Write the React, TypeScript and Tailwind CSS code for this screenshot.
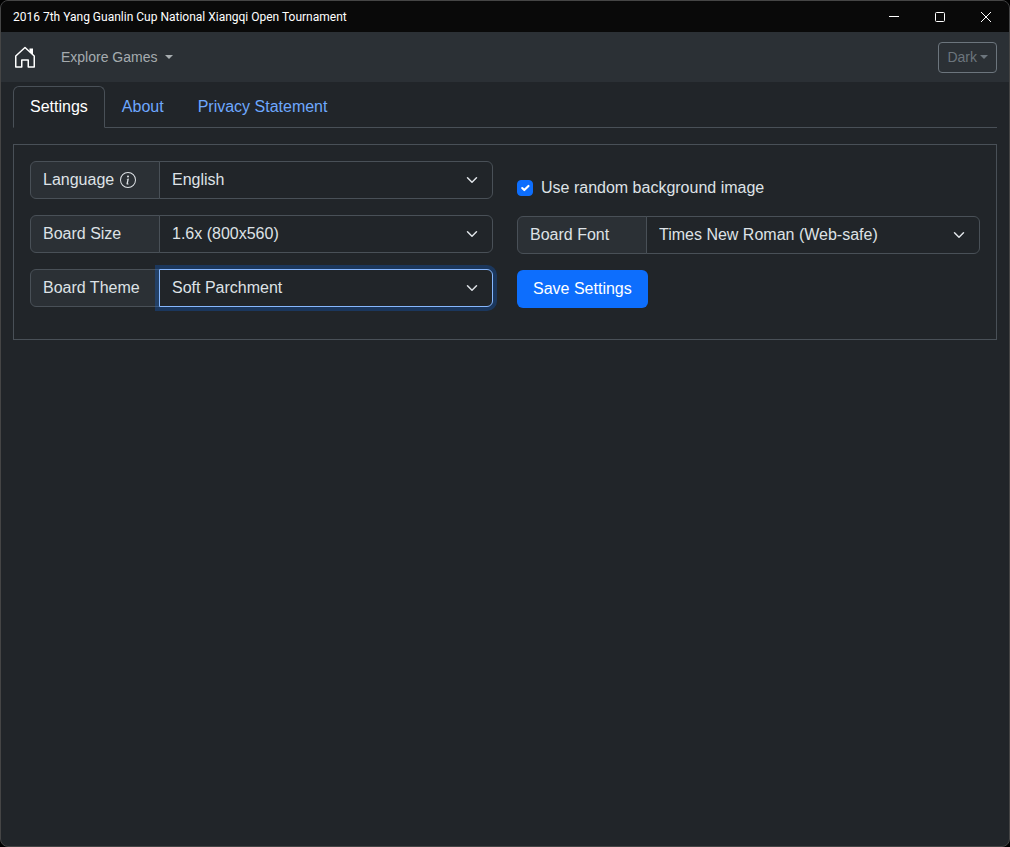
import React, { useState } from "react";
import { BsInfoCircle } from "react-icons/bs";

const tabs = ["Settings", "About", "Privacy Statement"];

type SelectGroupProps = {
  id: string;
  label: React.ReactNode;
  options: string[];
  autoFocus?: boolean;
};

function SelectGroup({ id, label, options, autoFocus }: SelectGroupProps) {
  const [value, setValue] = useState(options[0]);

  return (
    <div className="flex h-[38px]">
      <label
        htmlFor={id}
        className="flex w-[130px] shrink-0 items-center gap-1.5 rounded-l-md border border-[#495057] bg-[#2b3035] px-3 whitespace-nowrap"
      >
        {label}
      </label>
      <div className="relative -ml-px min-w-0 flex-1">
        <select
          id={id}
          value={value}
          autoFocus={autoFocus}
          onChange={(e) => setValue(e.target.value)}
          className="h-full w-full appearance-none rounded-r-md border border-[#495057] bg-[#212529] pr-9 pl-3 outline-none focus:border-[#86b7fe] focus:ring-4 focus:ring-[#0d6efd]/25"
        >
          {options.map((option) => (
            <option key={option}>{option}</option>
          ))}
        </select>
        <svg
          viewBox="0 0 16 16"
          className="pointer-events-none absolute inset-y-0 right-[13px] my-auto h-3 w-4"
          fill="none"
          stroke="#dee2e6"
          strokeWidth="2"
          strokeLinecap="round"
          strokeLinejoin="round"
        >
          <path d="m2 5 6 6 6-6" />
        </svg>
      </div>
    </div>
  );
}

function Caret() {
  return (
    <span className="border-x-4 border-t-4 border-x-transparent border-t-current" />
  );
}

function TitleBar() {
  return (
    <header className="flex h-[31px] items-center justify-between bg-[#090909] text-white">
      <h1 className="pl-3 font-[Roboto,sans-serif] text-[12px]">
        2016 7th Yang Guanlin Cup National Xiangqi Open Tournament
      </h1>
      <div className="flex h-full">
        <button aria-label="Minimize" className="grid w-[46px] place-items-center">
          <svg width="12" height="12" stroke="currentColor" fill="none">
            <path d="M1 5.5h10" />
          </svg>
        </button>
        <button aria-label="Maximize" className="grid w-[46px] place-items-center">
          <svg width="12" height="12" stroke="currentColor" fill="none">
            <rect x="1.5" y="1.5" width="9" height="9" rx="1" />
          </svg>
        </button>
        <button aria-label="Close" className="grid w-[46px] place-items-center">
          <svg width="12" height="12" stroke="currentColor" fill="none">
            <path d="m1 1 10 10M11 1 1 11" />
          </svg>
        </button>
      </div>
    </header>
  );
}

function Navbar() {
  return (
    <nav className="flex h-[50px] items-center bg-[#2b3035] px-3">
      <a href="#" aria-label="Home" className="text-white">
        <svg
          width="24"
          height="24"
          viewBox="0 0 24 24"
          fill="none"
          stroke="currentColor"
          strokeWidth="1.5"
          strokeLinejoin="round"
        >
          <path d="M2.75 22V11L12 2.5l9.25 8.5v11h-6v-7h-6.5v7z" />
          <path d="M16.5 3.5h3.5V10l-3.5-3.3z" fill="currentColor" stroke="none" />
        </svg>
      </a>
      <button className="ml-6 flex items-center gap-2 text-sm text-[#dee2e6]/70">
        Explore Games
        <Caret />
      </button>
      <button className="ml-auto flex h-[31px] items-center gap-[3px] rounded-sm border border-[#6c757d] px-2 text-sm text-[#6c757d]">
        Dark
        <Caret />
      </button>
    </nav>
  );
}

export default function App() {
  const [activeTab, setActiveTab] = useState("Settings");
  const [randomBackground, setRandomBackground] = useState(true);

  return (
    <div className="min-h-screen bg-black font-['Liberation_Sans',Arial,sans-serif] text-base text-[#dee2e6]">
      <div className="min-h-screen overflow-hidden rounded-lg border border-[#454545] bg-[#212529]">
        <TitleBar />
        <Navbar />

        <main className="px-3 pt-1">
          <div role="tablist" className="flex border-b border-[#495057]">
            {tabs.map((tab) => (
              <button
                key={tab}
                role="tab"
                aria-selected={tab === activeTab}
                onClick={() => setActiveTab(tab)}
                className={
                  tab === activeTab
                    ? "-mb-px rounded-t-md border border-[#495057] border-b-[#212529] bg-[#212529] px-4 py-2 text-white"
                    : "-mb-px rounded-t-md border border-transparent px-4 py-2 text-[#6ea8fe]"
                }
              >
                {tab}
              </button>
            ))}
          </div>

          {activeTab === "Settings" && (
            <form
              onSubmit={(e) => e.preventDefault()}
              className="mt-4 grid grid-cols-2 gap-x-6 border border-[#495057] px-4 pt-4 pb-[31px]"
            >
              <div className="flex flex-col gap-4">
                <SelectGroup
                  id="language"
                  label={
                    <>
                      Language
                      <BsInfoCircle />
                    </>
                  }
                  options={["English"]}
                />
                <SelectGroup
                  id="board-size"
                  label="Board Size"
                  options={["1.6x (800x560)"]}
                />
                <SelectGroup
                  id="board-theme"
                  label="Board Theme"
                  options={["Soft Parchment"]}
                  autoFocus
                />
              </div>

              <div className="flex flex-col gap-4 pt-[15px]">
                <div className="flex h-6 items-center gap-2">
                  <div className="relative size-4">
                    <input
                      id="random-background"
                      type="checkbox"
                      checked={randomBackground}
                      onChange={(e) => setRandomBackground(e.target.checked)}
                      className="peer block size-4 appearance-none rounded-sm border border-[#495057] checked:border-[#0d6efd] checked:bg-[#0d6efd]"
                    />
                    <svg
                      viewBox="0 0 20 20"
                      className="pointer-events-none absolute inset-px hidden size-3.5 peer-checked:block"
                      fill="none"
                      stroke="#fff"
                      strokeWidth="3"
                      strokeLinecap="round"
                      strokeLinejoin="round"
                    >
                      <path d="m6 10 3 3 6-6" />
                    </svg>
                  </div>
                  <label htmlFor="random-background">
                    Use random background image
                  </label>
                </div>
                <SelectGroup
                  id="board-font"
                  label="Board Font"
                  options={["Times New Roman (Web-safe)"]}
                />
                <button
                  type="submit"
                  className="h-[38px] self-start rounded-md bg-[#0d6efd] px-4 text-white"
                >
                  Save Settings
                </button>
              </div>
            </form>
          )}
        </main>
      </div>
    </div>
  );
}
